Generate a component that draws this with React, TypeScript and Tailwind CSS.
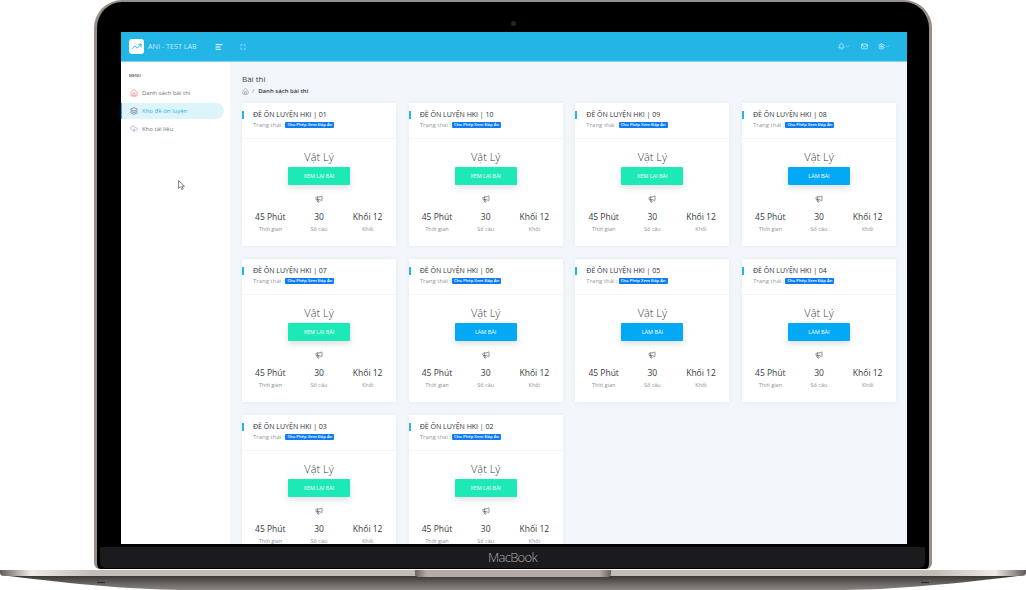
import { AlignLeft, Bell, ChevronDown, CloudUpload, Home, Layers, Mail, Megaphone, Maximize, Settings, TrendingUp } from 'lucide-react'

interface Exam {
  code: string
  done: boolean
}

const exams: Exam[] = [
  { code: '01', done: true },
  { code: '10', done: true },
  { code: '09', done: true },
  { code: '08', done: false },
  { code: '07', done: true },
  { code: '06', done: false },
  { code: '05', done: false },
  { code: '04', done: false },
  { code: '03', done: true },
  { code: '02', done: true },
]

function Stat({ value, label }: { value: string; label: string }) {
  return (
    <div className="flex flex-col items-center gap-[2px]">
      <span className="text-[8.5px] leading-[12px] text-[#343a40]">{value}</span>
      <span className="text-[5.5px] leading-[8px] text-[#8a929a]">{label}</span>
    </div>
  )
}

function ExamCard({ exam }: { exam: Exam }) {
  return (
    <div className="h-[143px] bg-white flex flex-col shadow-[0_0_3px_rgba(120,140,170,0.12)]">
      <div className="relative h-[36px] border-b border-[#f3f5f8] pl-[11px] pt-[7px]">
        <span className="absolute left-0 top-[8px] h-[8px] w-[2px] bg-[#22b5e5]" />
        <div className="text-[7px] leading-[10px] text-[#2d3238]">ĐỀ ÔN LUYỆN HKI | {exam.code}</div>
        <div className="mt-[1px] flex items-center gap-[1px] text-[6px] leading-[8px] text-[#949ba3]">
          <span>Trạng thái :</span>
          <span className="rounded-[1px] bg-[#0d7bf5] px-[2px] text-[4.2px] leading-[6px] font-semibold text-white">Cho Phép Xem Đáp Án</span>
        </div>
      </div>
      <div className="flex flex-col items-center pt-[10px]">
        <div className="text-[11px] leading-[16px] font-light text-[#343a40]">Vật Lý</div>
        <div
          className={`mt-[2px] h-[18px] w-[62px] rounded-[1px] flex items-center justify-center text-[5.5px] text-white shadow-[0_3px_6px_rgba(90,110,130,0.22)] ${
            exam.done ? 'bg-[#1de9b6]' : 'bg-[#04a9f5]'
          }`}
        >
          {exam.done ? 'XEM LẠI BÀI' : 'LÀM BÀI'}
        </div>
        <Megaphone className="mt-[10px] text-[#555c63]" size={8} strokeWidth={2} />
      </div>
      <div className="mt-[8px] grid grid-cols-3 px-[4px]">
        <Stat value="45 Phút" label="Thời gian" />
        <Stat value="30" label="Số câu" />
        <Stat value="Khối 12" label="Khối" />
      </div>
    </div>
  )
}

function Sidebar() {
  return (
    <div className="relative w-[109px] shrink-0 bg-white pt-[10px]">
      <span className="absolute left-[-1px] top-[71px] h-[32px] w-[1px] bg-[#22b5e5]" />
      <div className="pl-[8px] text-[4px] leading-[7px] font-semibold text-[#3f4750]">MENU</div>
      <div className="mt-[6px] flex h-[16px] items-center gap-[4px] pl-[9px] text-[6px] text-[#6c757d]">
        <Home size={8} className="text-[#f0787c]" />
        <span>Danh sách bài thi</span>
      </div>
      <div className="mt-[2px] mr-[6px] flex h-[16px] items-center gap-[4px] rounded-r-full border-l border-[#22b5e5] bg-[#def4fb] pl-[8px] text-[6px] text-[#27b3e2]">
        <Layers size={8} className="text-[#5f6a78]" />
        <span>Kho đề ôn luyện</span>
      </div>
      <div className="mt-[2px] flex h-[16px] items-center gap-[4px] pl-[9px] text-[6px] text-[#6c757d]">
        <CloudUpload size={8} className="text-[#a88ae0]" />
        <span>Kho tài liệu</span>
      </div>
      <svg className="absolute left-[57px] top-[118px]" width="7" height="10" viewBox="0 0 7 10">
        <path d="M.5.5v8l2-1.8 1.3 2.8 1.4-.6-1.3-2.7h2.6z" fill="#fff" stroke="#4a5058" strokeWidth=".7" />
      </svg>
    </div>
  )
}

function TopBar() {
  return (
    <div className="flex h-[30px] shrink-0 items-center border-b border-[#7fd6f2] bg-[#22b5e5] pl-[8px] pr-[17px] text-white">
      <div className="flex h-[15px] w-[15px] items-center justify-center rounded-[3px] bg-white">
        <TrendingUp size={11} className="text-[#22b5e5]" />
      </div>
      <span className="ml-[4px] text-[7.2px] text-[#c4ecf9]">ANI - TEST LAB</span>
      <AlignLeft size={8} className="ml-[18px]" strokeWidth={3} />
      <Maximize size={6} className="ml-[17px]" />
      <div className="ml-auto flex items-center">
        <Bell size={7} />
        <ChevronDown size={5} />
        <Mail size={7} className="ml-[11px]" />
        <Settings size={7} className="ml-[10px]" />
        <ChevronDown size={5} />
      </div>
    </div>
  )
}

export default function App() {
  return (
    <div className="relative h-[590px] w-[1026px] overflow-hidden bg-white font-['Open_Sans',sans-serif]">
      <div className="ml-[94px] h-[569px] w-[838px] rounded-t-[28px] rounded-b-[6px] border-x-[3px] border-t-[2px] border-[#978e89] bg-black pl-[24px] pt-[30px]">
        <div className="flex h-[512px] w-[786px] flex-col overflow-hidden">
          <TopBar />
          <div className="flex min-h-0 flex-1">
            <Sidebar />
            <div className="flex-1 bg-[#f2f6fa] pl-[12px] pr-[11px] pt-[11px]">
              <div className="text-[8px] leading-[12px] text-[#3d444c]">Bài thi</div>
              <div className="mt-[2px] flex items-center gap-[3px] text-[6px] leading-[9px]">
                <Home size={7} className="text-[#8a929a]" />
                <span className="text-[#8a929a]">/</span>
                <span className="ml-[1px] font-semibold text-[#30363c]">Danh sách bài thi</span>
              </div>
              <div className="mt-[7px] grid grid-cols-4 gap-x-[12.67px] gap-y-[13px]">
                {exams.map((exam) => (
                  <ExamCard key={exam.code} exam={exam} />
                ))}
              </div>
            </div>
          </div>
        </div>
        <div className="ml-[-21px] mt-[3px] flex h-[21px] w-[825px] items-center justify-center rounded-b-[6px] bg-[#1b1a1d] text-[13px] font-light tracking-[-0.7px] text-[#b0acaa]">
          MacBook
        </div>
      </div>
      <svg className="block" width="1026" height="21" viewBox="0 0 1026 21">
        <defs>
          <linearGradient id="lip" x1="0" x2="1" y1="0" y2="0">
            <stop offset="0" stopColor="#5f5a57" />
            <stop offset="0.03" stopColor="#efebe8" />
            <stop offset="0.09" stopColor="#c4bcb7" />
            <stop offset="0.91" stopColor="#c4bcb7" />
            <stop offset="0.97" stopColor="#efebe8" />
            <stop offset="1" stopColor="#5f5a57" />
          </linearGradient>
          <linearGradient id="under" x1="0" x2="0" y1="0" y2="1">
            <stop offset="0" stopColor="#35322f" />
            <stop offset="0.6" stopColor="#6b6764" />
            <stop offset="1" stopColor="#8a8683" />
          </linearGradient>
          <linearGradient id="notch" x1="0" x2="1" y1="0" y2="0">
            <stop offset="0" stopColor="#6a6360" />
            <stop offset="0.06" stopColor="#b5aba6" />
            <stop offset="0.94" stopColor="#b5aba6" />
            <stop offset="1" stopColor="#6a6360" />
          </linearGradient>
        </defs>
        <path d="M0 6 C80 16 140 21 190 21 L836 21 C886 21 946 16 1026 6 Z" fill="url(#under)" />
        <path d="M0 1 H1026 V4 Q1026 7 1020 7 H6 Q0 7 0 4 Z" fill="url(#lip)" />
        <path d="M415 1 H611 V6 Q610 8 606 8 H420 Q416 8 415 6 Z" fill="url(#notch)" />
        <rect x="97" y="13" width="8" height="1" fill="#2a2826" />
        <rect x="921" y="13" width="8" height="1" fill="#2a2826" />
      </svg>
      <span className="absolute left-[511px] top-[21px] h-[5px] w-[5px] rounded-full bg-[#22262e]" />
    </div>
  )
}
